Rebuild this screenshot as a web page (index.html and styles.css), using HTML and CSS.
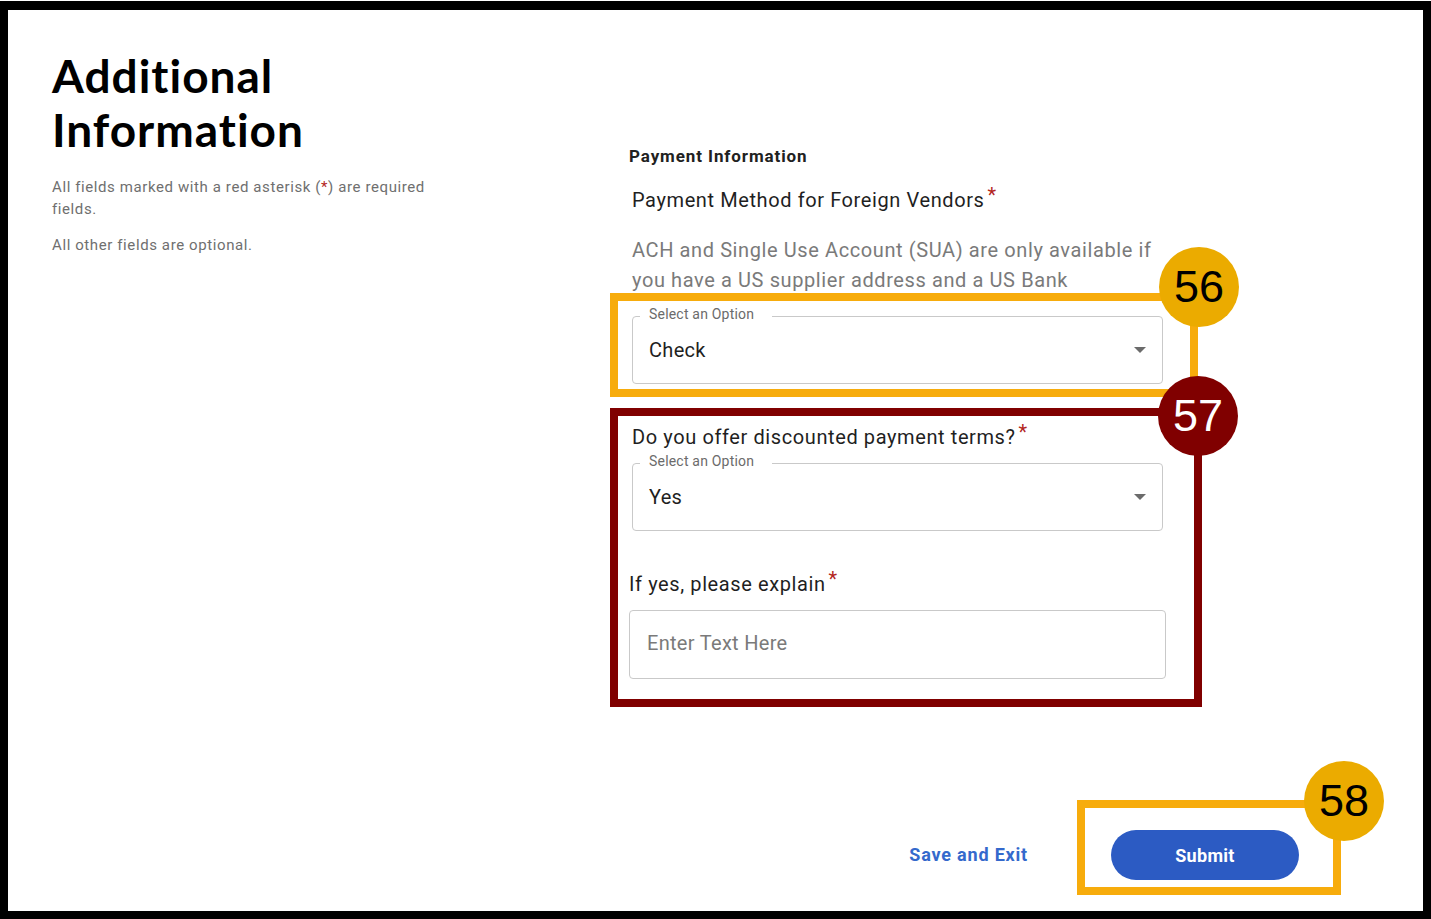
FILE: index.html
```html
<!DOCTYPE html>
<html lang="en">
<head>
    <meta charset="UTF-8">
    <meta name="viewport" content="width=device-width, initial-scale=1.0">
    <title>Additional Information</title>
    <link rel="stylesheet" href="styles.css">
</head>
<body>
    <div class="frame">
        <div class="page">
            <!-- Coluna da esquerda -->
            <aside class="intro">
                <h1>Additional Information</h1>
                <p>All fields marked with a red asterisk (<span class="red">*</span>) are required fields.</p>
                <p>All other fields are optional.</p>
            </aside>

            <!-- Formulário -->
            <section class="form">
                <h2>Payment Information</h2>
                <div class="question">Payment Method for Foreign Vendors<span class="req">*</span></div>
                <p class="hint">ACH and Single Use Account (SUA) are only available if you have a US supplier address and a US Bank</p>

                <div class="callout callout-gold callout-method">
                    <span class="badge badge-gold">56</span>
                    <div class="select">
                        <span class="select-label">Select an Option</span>
                        <span class="select-value">Check</span>
                        <span class="caret"></span>
                    </div>
                </div>

                <div class="callout callout-red callout-terms">
                    <span class="badge badge-red">57</span>
                    <div class="question">Do you offer discounted payment terms?<span class="req">*</span></div>
                    <div class="select">
                        <span class="select-label">Select an Option</span>
                        <span class="select-value">Yes</span>
                        <span class="caret"></span>
                    </div>
                    <div class="question explain">If yes, please explain<span class="req">*</span></div>
                    <div class="text-input">Enter Text Here</div>
                </div>
            </section>
        </div>

        <footer class="actions">
            <a class="save-link" href="#">Save and Exit</a>
            <div class="callout callout-gold callout-submit">
                <span class="badge badge-gold">58</span>
                <button class="submit" type="button">Submit</button>
            </div>
        </footer>
    </div>
</body>
</html>
```

FILE: styles.css
```css
html {
    box-sizing: border-box;
}
*, *:before, *:after {
    box-sizing: inherit;
}
body {
    margin: 0;
    padding: 1px 0 0;
    background: #fff;
    font-family: Roboto, 'Liberation Sans', sans-serif;
    color: #212121;
}

.frame {
    height: 918px;
    border: 8px solid #000;
    border-top-width: 9px;
    display: flex;
    flex-direction: column;
}

.page {
    display: flex;
}

/* Coluna da esquerda */
.intro {
    width: 602px;
    padding: 39px 0 0 44px;
}
.intro h1 {
    font-family: Lato, 'Open Sans', sans-serif;
    font-weight: 700;
    font-size: 46px;
    line-height: 54px;
    letter-spacing: 1px;
    font-variant-ligatures: none;
    margin: 0 0 19px;
    color: #000;
    max-width: 300px;
}
.intro p {
    font-size: 15px;
    line-height: 22px;
    letter-spacing: 0.6px;
    color: #6f6f6f;
    margin: 0 0 14px;
    max-width: 400px;
}
.red {
    color: #b3261e;
}

.req {
    color: #b3261e;
    vertical-align: 0.25em;
    margin-left: 3px;
}

/* Formulário */
.form {
    width: 600px;
    padding-top: 136px;
}
.form h2 {
    font-size: 17px;
    line-height: 20px;
    font-weight: 700;
    margin: 0 0 15px 19px;
    letter-spacing: 0.9px;
}
.question {
    font-size: 20px;
    line-height: 28px;
    letter-spacing: 0.6px;
    color: #1f1f1f;
    margin-left: 22px;
}
.hint {
    font-size: 20px;
    line-height: 30px;
    letter-spacing: 0.6px;
    color: #7a7a7a;
    margin: 21px 0 -2px 22px;
    width: 540px;
}

/* Caixas de destaque */
.callout {
    position: relative;
    border: 8px solid #f7ac0c;
}
.callout-red {
    border-color: #800000;
}
.callout-method {
    width: 588px;
    padding: 15px 0 5px 14px;
}
.callout-terms {
    width: 592px;
    margin-top: 11px;
    padding: 2px 0 20px 14px;
}
.callout-terms .question {
    margin-left: 0;
}
.callout-terms .select {
    margin-top: 12px;
}
.callout-terms .explain {
    margin: 34px 0 0 -3px;
}

.badge {
    position: absolute;
    width: 80px;
    height: 80px;
    border-radius: 50%;
    display: flex;
    align-items: center;
    justify-content: center;
    font-family: 'Liberation Sans', Arial, sans-serif;
    font-size: 45px;
    z-index: 2;
}
.badge-gold {
    background: #ebab00;
    color: #000;
}
.badge-red {
    background: #800000;
    color: #fff;
}
.callout-method .badge {
    top: -54px;
    right: -49px;
}
.callout-terms .badge {
    top: -40px;
    right: -44px;
}
.callout-submit .badge {
    top: -47px;
    right: -51px;
}

/* Campo de seleção */
.select {
    position: relative;
    width: 531px;
    height: 68px;
    border: 1px solid #c9c9c9;
    border-radius: 4px;
    display: flex;
    align-items: center;
    padding: 0 16px 0 16px;
}
.select-label {
    position: absolute;
    top: -12px;
    left: 7px;
    padding: 0 18px 0 9px;
    background: #fff;
    font-size: 14px;
    line-height: 18px;
    letter-spacing: 0.2px;
    color: #6b6b6b;
}
.select-value {
    flex: 1;
    font-size: 20px;
    letter-spacing: 0.3px;
    color: #1f1f1f;
}
.caret {
    width: 0;
    height: 0;
    border-left: 6px solid transparent;
    border-right: 6px solid transparent;
    border-top: 6px solid #6b6b6b;
}

.text-input {
    width: 537px;
    height: 69px;
    margin: 12px 0 0 -3px;
    border: 1px solid #c9c9c9;
    border-radius: 4px;
    display: flex;
    align-items: center;
    padding: 0 0 3px 17px;
    font-size: 20px;
    letter-spacing: 0.3px;
    color: #7a7a7a;
}

/* Rodapé */
.actions {
    margin-top: auto;
    display: flex;
    justify-content: flex-end;
    align-items: center;
    padding: 0 82px 16px 0;
}
.save-link {
    color: #3469cc;
    font-size: 18px;
    font-weight: 700;
    letter-spacing: 0.8px;
    text-decoration: none;
    margin-right: 49px;
    margin-top: 14px;
}
.callout-submit {
    padding: 22px 34px 7px 26px;
}
.submit {
    width: 188px;
    height: 50px;
    border: none;
    border-radius: 25px;
    background: #2c5bc3;
    color: #fff;
    font-family: Roboto, 'Liberation Sans', sans-serif;
    font-size: 18px;
    font-weight: 700;
    letter-spacing: 0.3px;
    cursor: pointer;
}
```
